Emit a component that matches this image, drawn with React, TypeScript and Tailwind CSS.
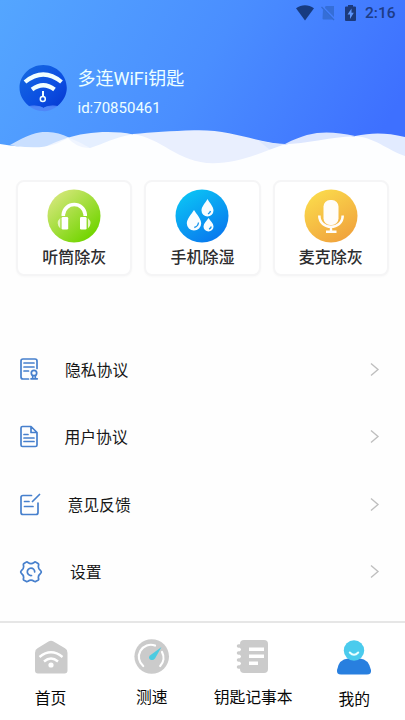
import React from "react";

const font = "font-['Roboto','Noto_Sans_CJK_SC',sans-serif]";

function StatusBar() {
  return (
    <div className="flex h-7 items-center justify-end pr-[8px] text-[#1d3c86]">
      <svg width="70" height="28" viewBox="0 0 70 28" className="shrink-0">
        <path d="M1 8.300C6.500 4.100 13.500 4.100 19 8.300L10 20.500Z" fill="#173b80" />
        <path d="M31 6H39V17L30 8Q30 6 31 6ZM28 9.500L38 19.500H28.500Q27.500 19.500 27.500 18.500Z" fill="#326bd0" opacity=".85" />
        <path d="M26.500 7L39 20" stroke="#326bd0" strokeWidth="1.200" />
        <path d="M51 6.500H53V5H58V6.500H60Q61 6.500 61 7.500V20Q61 21 60 21H51Q50 21 50 20V7.500Q50 6.500 51 6.500Z" fill="#1c3a7c" />
        <path d="M56.500 8.500L52.500 14.500H55V19L58.800 12.800H56.500Z" fill="#5c94fb" />
      </svg>
      <span className="w-[32px] whitespace-nowrap text-[15.500px] font-medium leading-none">2:16</span>
    </div>
  );
}

function Waves() {
  return (
    <svg width="405" height="56" viewBox="0 124 405 56" className="absolute bottom-0 left-0">
      <path d="M10 145C30 133 40 131.500 48 132C62 132 76 141 90 148L66 150L30 149Z" fill="#c9dfff" />
      <path d="M66 138.500C84 132 112 130 133 134.500L110 146L90 149L72 148Z" fill="#e5efff" />
      <path d="M56 142L68 137.500C77 141 83 144 90 148L70 150L40 149Z" fill="#f0f5ff" />
      <path d="M133 134C152 132.500 171 131 194 130.300C230 129 255 142 285 144.500V175H133Z" fill="#e9effe" />
      <path d="M259 141Q272 144 285 144L270 150Z" fill="#dce7fe" />
      <path d="M285 144C312 129.500 330 131 355 136L325 144Z" fill="#dce6ff" />
      <path d="M355 136C372 132.500 386 132.500 405 137V170H355Z" fill="#e2ebff" />
      <path d="M0 144C20 147 40 150 57 143.500L68 138C72 143 80 148 90 148C104 144 115 137 133 134.300C160 137 178 163 213 163.300C240 163 262 152 285 144.200C305 144 330 137 355 136.300C374 137 387 150 405 156V180H0Z" fill="#fdfeff" />
    </svg>
  );
}

function Avatar() {
  return (
    <svg width="48" height="48" viewBox="0 0 48 48" className="shrink-0">
      <defs>
        <linearGradient id="avatar" x1="0" y1="0" x2="1" y2="1">
          <stop stopColor="#166be0" /><stop offset=".6" stopColor="#0b4fe2" /><stop offset="1" stopColor="#0637cf" />
        </linearGradient>
      </defs>
      <path d="M10 42C-9 27 3 1 24.300 1S57 27 38.500 42C33 43 29 41 24.500 44C20 41 15 43 10 42Z" fill="url(#avatar)" />
      <path d="M10 42Q18 40 24.500 44Q31 40 38.500 42Q31 48 24 47Q16 47 10 42Z" fill="#4f80f6" opacity=".75" />
      <path d="M6 18Q24.300 3 42.500 18M13 25.500Q24.300 17 35.500 25.500" fill="none" stroke="#f0ffff" strokeWidth="4.200" />
      <path d="M24 27V33" stroke="#f0ffff" strokeWidth="2" />
      <circle cx="23.800" cy="35" r="2.500" fill="none" stroke="#f0ffff" strokeWidth="1.500" />
    </svg>
  );
}

function HeadphonesIcon() {
  return (
    <svg width="54" height="54" viewBox="0 0 54 54">
      <defs><linearGradient id="green" x1=".1" y1=".1" x2=".8" y2=".9"><stop stopColor="#d5e77b" /><stop offset="1" stopColor="#72d500" /></linearGradient></defs>
      <circle cx="27" cy="27" r="26.500" fill="url(#green)" />
      <path d="M16.300 27V25.500A11 11 0 0 1 38.200 25.500V27" fill="none" stroke="#fff" strokeWidth="3.600" />
      <rect x="14.600" y="28" width="6.600" height="12.500" rx="1.300" fill="#fff" />
      <rect x="33" y="28" width="6.600" height="12.500" rx="1.300" fill="#fff" />
      <path d="M13.300 29Q8 34 13.300 39.500ZM40.900 29Q46.200 34 40.900 39.500Z" fill="#e7f6c4" />
    </svg>
  );
}

function DropsIcon() {
  return (
    <svg width="54" height="54" viewBox="0 0 54 54">
      <defs><linearGradient id="blue" x1=".2" y1="0" x2=".8" y2="1"><stop stopColor="#0bc5f5" /><stop offset="1" stopColor="#0875ee" /></linearGradient></defs>
      <circle cx="27" cy="27" r="26.500" fill="url(#blue)" />
      <g fill="#f8fdff">
        <path d="M19 21C21.500 25 26.200 30 26.200 34.300A7.200 7.200 0 0 1 11.800 34.300C11.800 30 16.500 25 19 21Z" />
        <path d="M32.500 10C34.700 14 38.500 17.500 38.500 21.500A6 6 0 0 1 26.500 21.500C26.500 17.500 30.300 14 32.500 10Z" />
        <path d="M33.500 29C35.500 32 38.500 34.500 38.500 37.500A5 5 0 0 1 28.500 37.500C28.500 34.500 31.500 32 33.500 29Z" />
      </g>
      <path d="M23.500 33.500Q23 37.500 19.300 38.500M35.500 22Q35 24 33 25M36.300 37.500Q35.800 39.500 34 40" fill="none" stroke="#1595ec" strokeWidth="1.300" />
    </svg>
  );
}

function MicIcon() {
  return (
    <svg width="54" height="54" viewBox="0 0 54 54">
      <defs><linearGradient id="gold" x1=".2" y1="0" x2=".8" y2="1"><stop stopColor="#fbdc4c" /><stop offset="1" stopColor="#f0a03c" /></linearGradient></defs>
      <circle cx="27" cy="27" r="26.500" fill="url(#gold)" />
      <rect x="19.500" y="11" width="15" height="25" rx="6.500" fill="#fffdf9" />
      <path d="M15.300 26.500C15.300 41.500 38.700 41.500 38.700 26.500" fill="none" stroke="#fffdf9" strokeWidth="2.600" />
      <path d="M27 37V42.500M22 42.800H32.500" fill="none" stroke="#fffdf9" strokeWidth="2.400" />
    </svg>
  );
}

function CleanCard({ icon, label }: { icon: React.ReactNode; label: string }) {
  return (
    <div className="flex h-[96px] flex-1 flex-col items-center rounded-[8px] border-2 border-[#f5f5f6] bg-white pt-[7px] shadow-[0_1px_2px_#f8f8f8]">
      {icon}
      <span className="mt-[3.500px] whitespace-nowrap text-[16px] font-medium leading-[22px] text-[#2d2d2f]">{label}</span>
    </div>
  );
}

const stroke = { fill: "none", stroke: "#4780cd", strokeWidth: 1.7, strokeLinejoin: "round", strokeLinecap: "round" } as const;

const PrivacyIcon = () => (
  <svg width="24" height="24" viewBox="0 0 24 24" {...stroke}>
    <path d="M9.500 21H4Q2 21 2 19V3Q2 1 4 1H16Q18 1 18 3V10.500M5 5H15M5 9H15M5 13H9.500" />
    <circle cx="15" cy="15" r="2.700" /><path d="M13.700 17.500V20M16.300 17.500V20M12 20.800H18.300" />
  </svg>
);
const DocIcon = () => (
  <svg width="24" height="24" viewBox="0 0 24 24" {...stroke}>
    <path d="M3.500 1.500H12L18 7.500V20Q18 21.500 16.500 21.500H3.500Q2 21.500 2 20V3Q2 1.500 3.500 1.500ZM12 1.500V7.500H18M5 9.500H9M5 13H15M5 16.500H15" />
  </svg>
);
const FeedbackIcon = () => (
  <svg width="24" height="24" viewBox="0 0 24 24" {...stroke}>
    <path d="M12.500 2.500H4Q2 2.500 2 4.500V19.500Q2 21.500 4 21.500H17Q19 21.500 19 19.500V10M5.500 8.500H10M5.500 13.500H14M13.500 8.500L20.500 1.500" />
  </svg>
);
const SettingsIcon = () => (
  <svg width="24" height="24" viewBox="0 0 24 24" {...stroke}>
    <path d="M7 2.300Q8 1.600 9 2.500Q12 4.800 15 2.500Q16 1.600 17 2.300L19 3.500Q20 4.200 19.500 5.500Q18.800 8.500 21.500 10.500Q23 12 21.500 13.500Q18.800 15.500 19.500 18.500Q20 19.500 19 20.200L17 21.300Q16 22 15 21.200Q12 19 9 21.200Q8 22 7 21.300L5 20.200Q4 19.500 4.500 18.500Q5.200 15.500 2.500 13.500Q1 12 2.500 10.500Q5.200 8.500 4.500 5.500Q4 4.200 5 3.500Z" />
    <path d="M12.500 15.500A3.700 3.700 0 1 1 15.700 12" />
  </svg>
);

function MenuRow({ icon, label, inset }: { icon: React.ReactNode; label: string; inset: string }) {
  return (
    <div className="flex h-[67.500px] items-center pl-[19px] pr-6">
      <span className="h-6 w-6 shrink-0">{icon}</span>
      <span className={`${inset} flex-1 pt-[2px] text-[15.800px] leading-6 text-[#171717]`}>{label}</span>
      <svg width="14" height="16" viewBox="0 0 14 16"><path d="M4 1.500L11 7.500L4 13.500" fill="none" stroke="#bfbfbf" strokeWidth="1.400" /></svg>
    </div>
  );
}

const HomeIcon = () => (
  <svg width="36" height="36" viewBox="0 0 36 36">
    <path d="M15.500 2.500Q18 1 20.500 2.500L32 9.200Q34.500 10.500 34.500 14V31.500Q34.500 34.500 31.500 34.500H5Q2 34.500 2 31.500V14Q2 10.500 4.500 9.200Z" fill="#cbcbcb" />
    <path d="M6.500 18Q18 8.500 29.500 18M11 22.500Q18 16.500 25 22.500" fill="none" stroke="#fff" strokeWidth="2.400" />
    <circle cx="18" cy="26" r="2.600" fill="#fff" />
  </svg>
);
const SpeedIcon = () => (
  <svg width="36" height="36" viewBox="0 0 36 36">
    <circle cx="17.700" cy="17.500" r="17.300" fill="#cbcbcb" />
    <path d="M9.200 27A12 12 0 0 1 21 6.500M28 13A12 12 0 0 1 26.200 27" fill="none" stroke="#fff" strokeWidth="2.200" strokeLinecap="round" />
    <path d="M27.500 8L21 19.500Q19 22 16 20.500Q14 18.500 16 16.500Z" fill="#4ccbe1" />
  </svg>
);
const NotesIcon = () => (
  <svg width="36" height="36" viewBox="0 0 36 36">
    <rect x="5" y="1" width="28" height="33" rx="4" fill="#cbcbcb" />
    <path d="M3.500 7H8M3.500 14H8M3.500 21H8M3.500 28H8" stroke="#cbcbcb" strokeWidth="3.500" strokeLinecap="round" />
    <path d="M4 10.500H6M4 17.500H6M4 24.500H6" stroke="#fff" strokeWidth="2" />
    <path d="M14 8.500H29V12H14ZM14 15.500H29V19H14ZM14 22.500H23V26H14Z" fill="#fff" />
  </svg>
);
const ProfileIcon = () => (
  <svg width="36" height="36" viewBox="0 0 36 36">
    <path d="M1 31Q3 20 12 19.500H24Q32.500 20 35 31Q35.500 35.500 31 35.500H5Q.500 35.500 1 31Z" fill="#287fdf" />
    <circle cx="18" cy="11.500" r="10.200" fill="#4bcbed" />
    <path d="M13.800 13.500Q18 18 22.200 13.500" fill="none" stroke="#eaffff" strokeWidth="2" strokeLinecap="round" />
  </svg>
);

function Tab({ icon, label, gap = "mt-[11px]" }: { icon: React.ReactNode; label: string; gap?: string }) {
  return (
    <div className="flex flex-1 flex-col items-center pt-[15.500px]">
      {icon}
      <span className={`${gap} whitespace-nowrap text-[15.800px] leading-6 text-[#080808]`}>{label}</span>
    </div>
  );
}

export default function App() {
  return (
    <main className={`${font} flex h-[720px] w-[405px] flex-col overflow-hidden bg-[#fefefe]`}>
      <header className="relative h-[180px] shrink-0 bg-[linear-gradient(120deg,#54a6ff_0%,#4a8eff_48%,#3e70ff_90%)]">
        <Waves />
        <StatusBar />
        <div className="flex pl-[19px] pt-9">
          <Avatar />
          <div className="relative flex flex-col pl-[10.500px] pt-[3px] text-[#edffff]">
            <span className="text-[18px] leading-6">多连WiFi钥匙</span>
            <span className="mt-[7px] text-[15px] leading-5">id:70850461</span>
          </div>
        </div>
      </header>
      <section className="flex shrink-0 gap-[12px] px-[16px]">
        <CleanCard icon={<HeadphonesIcon />} label="听筒除灰" />
        <CleanCard icon={<DropsIcon />} label="手机除湿" />
        <CleanCard icon={<MicIcon />} label="麦克除灰" />
      </section>
      <section className="mt-[60px] flex-1">
        <MenuRow icon={<PrivacyIcon />} label="隐私协议" inset="ml-[22px]" />
        <MenuRow icon={<DocIcon />} label="用户协议" inset="ml-[21.500px]" />
        <MenuRow icon={<FeedbackIcon />} label="意见反馈" inset="ml-[24.500px]" />
        <MenuRow icon={<SettingsIcon />} label="设置" inset="ml-[27px]" />
      </section>
      <nav className="flex h-[99px] shrink-0 border-t-2 border-[#e6e6e6] bg-white">
        <Tab icon={<HomeIcon />} label="首页" gap="mt-[12.500px]" />
        <Tab icon={<SpeedIcon />} label="测速" gap="mt-[11.500px]" />
        <Tab icon={<NotesIcon />} label="钥匙记事本" gap="mt-[11.500px]" />
        <Tab icon={<ProfileIcon />} label="我的" gap="mt-[13px]" />
      </nav>
    </main>
  );
}
